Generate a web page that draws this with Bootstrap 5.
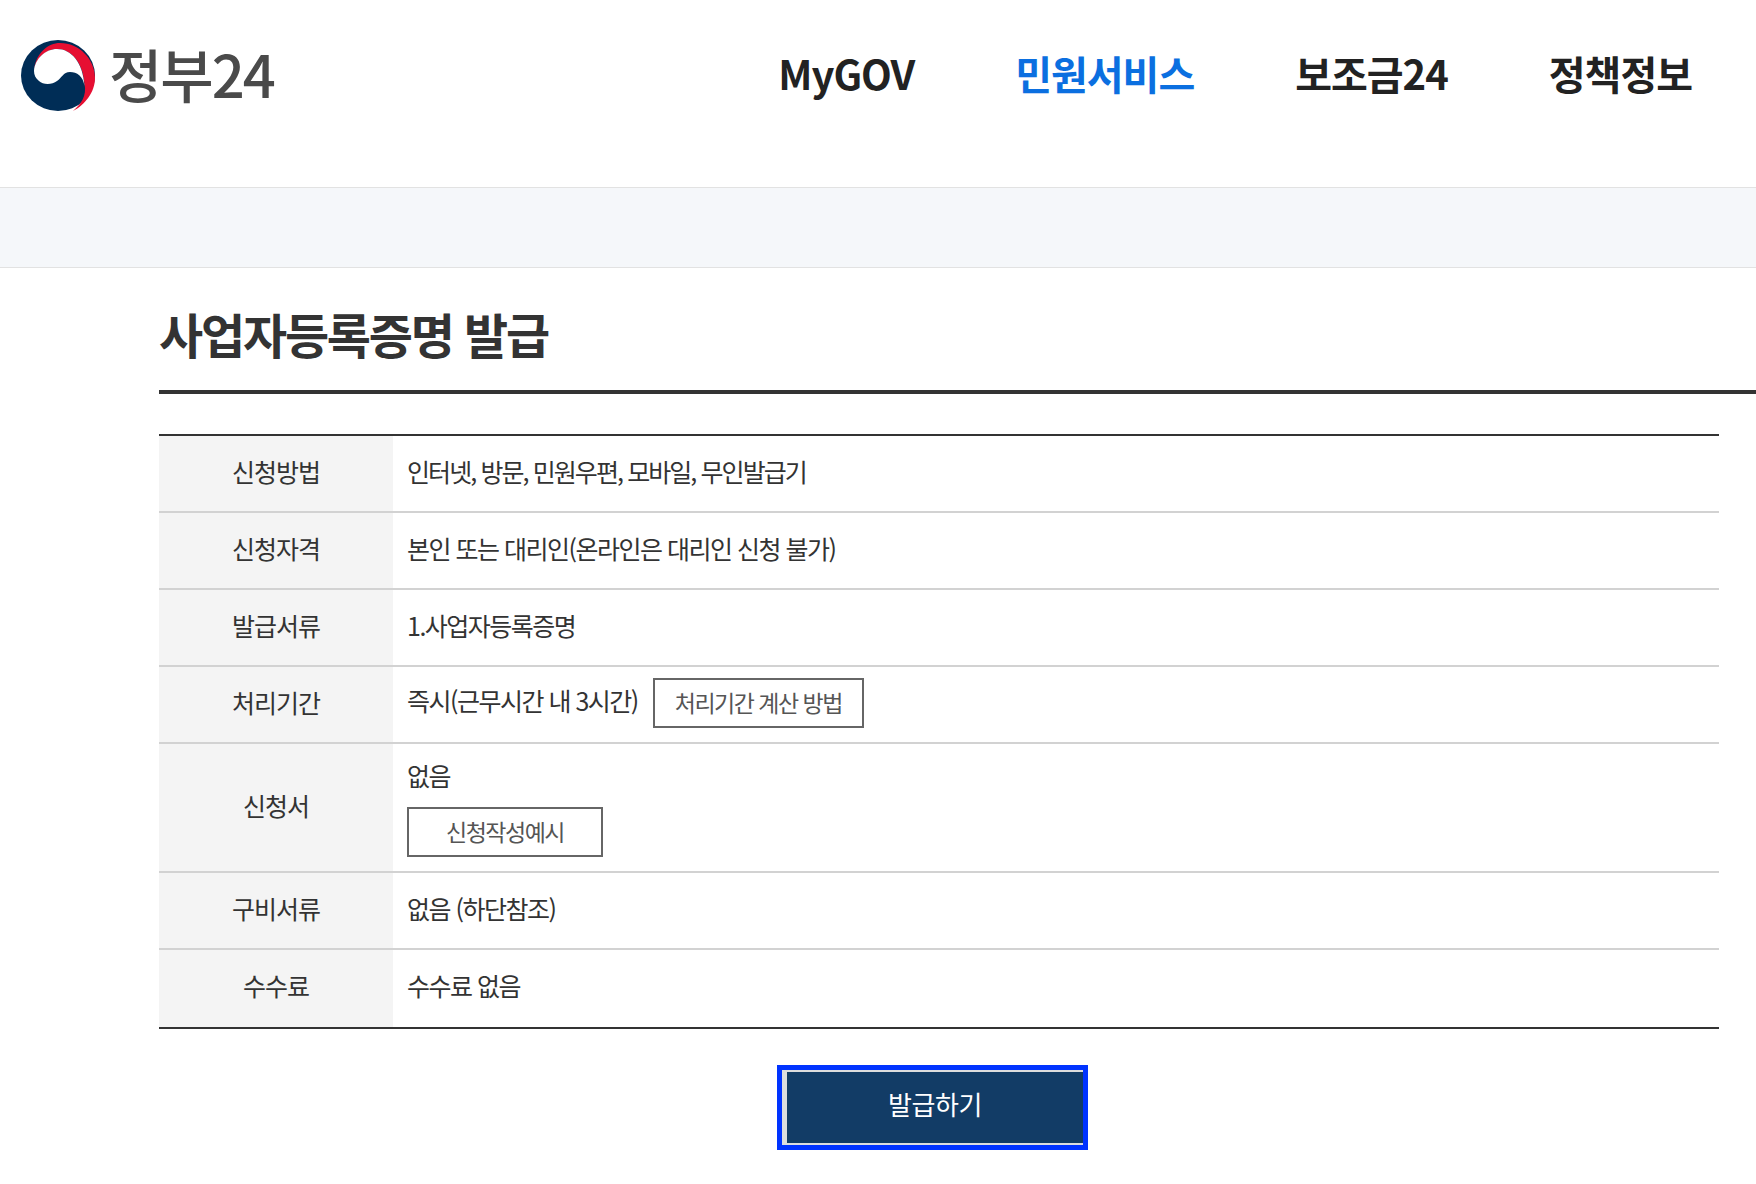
<!DOCTYPE html>
<html lang="ko">
<head>
<meta charset="UTF-8">
<title>사업자등록증명 발급</title>
<link href="https://cdn.jsdelivr.net/npm/bootstrap@5.3.0/dist/css/bootstrap.min.css" rel="stylesheet">
<style>
    body {
        font-family: "Noto Sans CJK KR", "Noto Sans", sans-serif;
        color: #333;
        background: #fff;
    }
    .top-header { height: 187px; padding: 40px 64px 0 21px; }
    .logo-text { font-size: 58px; line-height: 66px; padding-bottom: 5px; color: #4a4a4a; font-weight: 500; letter-spacing: -2px; margin-left: 14px; }
    .main-menu { gap: 101px; }
    .main-menu a { font-size: 40px; line-height: 67px; font-weight: 700; letter-spacing: -1px; color: #222; text-decoration: none; }
    .main-menu a.active { color: #0b6fe0; }
    .sub-band { height: 81px; background: #f5f7fa; border-top: 1px solid #e2e2e2; border-bottom: 1px solid #e2e2e2; }
    .page-body { margin-left: 159px; }
    .page-title { font-size: 48px; line-height: 70px; font-weight: 700; letter-spacing: -2.2px; color: #333; margin: 0; padding-top: 30px; height: 92px; box-sizing: content-box; border-bottom: 4px solid #333; }
    .info-table { width: 1560px; margin: 40px 0 0; border-top: 2px solid #333; border-bottom: 2px solid #333; border-collapse: collapse; }
    .info-table th, .info-table td { font-size: 25px; letter-spacing: -1.5px; line-height: 35px; font-weight: 400; border-bottom: 2px solid #d2d2d2; padding: 18px 14px 22px; vertical-align: middle; color: #333; }
    .info-table tr:last-child th, .info-table tr:last-child td { border-bottom: 0; padding-bottom: 24px; }
    .info-table th { width: 234px; background: #f4f4f4; text-align: center; letter-spacing: -1px; }
    .info-table td.method-cell { letter-spacing: -1.92px; }
    .info-table td.period-cell { padding-top: 11px; padding-bottom: 14px; }
    .info-table td.form-cell { padding-top: 14px; padding-bottom: 14px; }
    .period-text { position: relative; top: -3px; }
    .period-row { gap: 15px; }
    .line-btn { display: inline-block; height: 50px; line-height: 44px; padding: 0 20px; font-size: 23px; letter-spacing: -1.5px; color: #555; background: #fff; border: 2px solid #666; border-radius: 0; }
    .line-btn:hover { color: #555; background: #fff; border-color: #666; }
    .sample-btn { display: block; width: 196px; text-align: center; margin-top: 14px; }
    .btn-row { padding: 36px 50px 34px 0; }
    .issue-btn { width: 311px; height: 85px; background: #123c66; color: #fff; font-size: 26px; letter-spacing: -.4px; border-radius: 0; outline: 5px solid #0033ff; outline-offset: -5px; border: 0; border-left: 10px solid #ddd; border-top: 7px solid #ddd; border-bottom: 7px solid #ddd; border-right: 5px solid #0033ff; padding: 0 0 8px; }
    .issue-btn:hover { background: #123c66; color: #fff; border-color: #ddd #0033ff #ddd #ddd; }
</style>
</head>
<body>
    <header class="top-header d-flex justify-content-between align-items-start">
        <a href="#" class="d-flex align-items-center text-decoration-none">
            <svg width="74" height="71" viewBox="0 0 74 71">
                <ellipse cx="37" cy="35.500" rx="37" ry="35.500" fill="#002d56"/>
                <path d="M13 30C15 13 27 3 39 3C58 3 74 19 74 38C74 52 64 65 52 71C60 64 66 56 63.500 44C62 22 50 9 36 9C25 9 15 18 13 30Z" fill="#e60f32"/>
                <path d="M13 31C14 18 25 9 36 9C50 9 62 22 63.500 46C62 36 56 32 49 32C42 32 41 38 36 41C31 45 22 45 18 41C14.500 38 13 35 13 31Z" fill="#fff"/>
            </svg>
            <span class="logo-text">정부24</span>
        </a>
        <nav class="main-menu d-flex">
            <a href="#">MyGOV</a>
            <a href="#" class="active">민원서비스</a>
            <a href="#">보조금24</a>
            <a href="#">정책정보</a>
        </nav>
    </header>
    <div class="sub-band"></div>

    <main class="page-body">
        <h1 class="page-title">사업자등록증명 발급</h1>
        <table class="info-table">
            <tbody>
                <tr><th>신청방법</th><td class="method-cell">인터넷, 방문, 민원우편, 모바일, 무인발급기</td></tr>
                <tr><th>신청자격</th><td>본인 또는 대리인(온라인은 대리인 신청 불가)</td></tr>
                <tr><th>발급서류</th><td>1.사업자등록증명</td></tr>
                <tr><th>처리기간</th><td class="period-cell"><div class="d-flex align-items-center period-row"><span class="period-text">즉시(근무시간 내 3시간)</span><a href="#" class="btn line-btn">처리기간 계산 방법</a></div></td></tr>
                <tr><th>신청서</th><td class="form-cell"><div>없음</div><a href="#" class="btn line-btn sample-btn">신청작성예시</a></td></tr>
                <tr><th>구비서류</th><td>없음 (하단참조)</td></tr>
                <tr><th>수수료</th><td>수수료 없음</td></tr>
            </tbody>
        </table>
        <div class="btn-row d-flex justify-content-center">
            <button type="button" class="btn issue-btn">발급하기</button>
        </div>
    </main>
<script src="https://cdn.jsdelivr.net/npm/bootstrap@5.3.0/dist/js/bootstrap.bundle.min.js"></script>
</body>
</html>
